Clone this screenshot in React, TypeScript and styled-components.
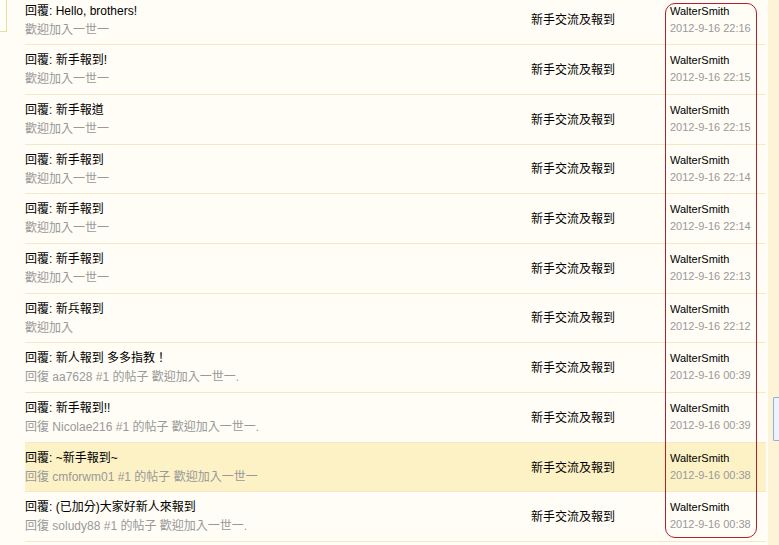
import React from "react";
import styled, { createGlobalStyle } from "styled-components";

const Global = createGlobalStyle`
  html, body { margin: 0; padding: 0; background: #fffdf6; overflow: hidden; }
  body { font-family: Tahoma, "Liberation Sans", "Noto Sans CJK TC", sans-serif; font-size: 12px; }
`;

const Page = styled.div`
  position: relative;
  display: flex;
  width: 779px;
  height: 545px;
  overflow: hidden;
  background: #fffdf6;
`;

const LeftGutter = styled.div`
  width: 25px;
  flex: none;
`;

const CornerBox = styled.div`
  width: 6px;
  height: 31px;
  border: 1px solid #f0dc9a;
  border-left: none;
  border-top: none;
  background: #fffef9;
`;

const List = styled.div`
  width: 741px;
  flex: none;
  margin-top: -4.5px;
`;

const Row = styled.div<{ $hl?: boolean }>`
  display: grid;
  grid-template-columns: 506px 139px 1fr;
  height: 49.7px;
  box-sizing: border-box;
  border-bottom: 1px solid #f3e9c9;
  background: ${(p) => (p.$hl ? "#fdf2c6" : "transparent")};
`;

const TitleCell = styled.div`
  padding-top: 7px;
  line-height: 17px;
  white-space: nowrap;
  display: flex;
  flex-direction: column;
  gap: 2px;
`;

const Title = styled.div`
  color: #000;
`;

const Sub = styled.div`
  color: #999;
`;

const Forum = styled.div`
  align-self: center;
  color: #000;
  padding-bottom: 2px;
`;

const AuthorCell = styled.div`
  padding-top: 7px;
  line-height: 16px;
  font-size: 11px;
  display: flex;
  flex-direction: column;
  gap: 1px;
`;

const Author = styled.div`
  color: #000;
`;

const DateText = styled.div`
  color: #999;
`;

const Sidebar = styled.div`
  flex: 1;
  margin-left: 2px;
  background: #fdf4d8;
  padding-top: 397px;
  padding-left: 5px;
`;

const Widget = styled.div`
  height: 42px;
  border: 1px solid #8fb0d8;
  border-right: none;
  border-radius: 2px 0 0 2px;
  background: #eef4fc;
`;

const Annotation = styled.div`
  position: absolute;
  left: 665px;
  top: 3px;
  width: 90px;
  height: 533px;
  border: 1px solid #b3202c;
  border-radius: 10px;
  pointer-events: none;
`;

type Item = { t: string; s: string; d: string; hl?: boolean };

const items: Item[] = [
  { t: "回覆: Hello, brothers!", s: "歡迎加入一世一", d: "2012-9-16 22:16" },
  { t: "回覆: 新手報到!", s: "歡迎加入一世一", d: "2012-9-16 22:15" },
  { t: "回覆: 新手報道", s: "歡迎加入一世一", d: "2012-9-16 22:15" },
  { t: "回覆: 新手報到", s: "歡迎加入一世一", d: "2012-9-16 22:14" },
  { t: "回覆: 新手報到", s: "歡迎加入一世一", d: "2012-9-16 22:14" },
  { t: "回覆: 新手報到", s: "歡迎加入一世一", d: "2012-9-16 22:13" },
  { t: "回覆: 新兵報到", s: "歡迎加入", d: "2012-9-16 22:12" },
  { t: "回覆: 新人報到 多多指教！", s: "回復 aa7628 #1 的帖子 歡迎加入一世一.", d: "2012-9-16 00:39" },
  { t: "回覆: 新手報到!!", s: "回復 Nicolae216 #1 的帖子 歡迎加入一世一.", d: "2012-9-16 00:39" },
  { t: "回覆: ~新手報到~", s: "回復 cmforwm01 #1 的帖子 歡迎加入一世一", d: "2012-9-16 00:38", hl: true },
  { t: "回覆: (已加分)大家好新人來報到", s: "回復 soludy88 #1 的帖子 歡迎加入一世一.", d: "2012-9-16 00:38" },
];

export default function App() {
  return (
    <>
      <Global />
      <Page>
        <LeftGutter>
          <CornerBox />
        </LeftGutter>
        <List>
          {items.map((it, i) => (
            <Row key={i} $hl={it.hl}>
              <TitleCell>
                <Title>{it.t}</Title>
                <Sub>{it.s}</Sub>
              </TitleCell>
              <Forum>新手交流及報到</Forum>
              <AuthorCell>
                <Author>WalterSmith</Author>
                <DateText>{it.d}</DateText>
              </AuthorCell>
            </Row>
          ))}
        </List>
        <Sidebar>
          <Widget />
        </Sidebar>
        <Annotation />
      </Page>
    </>
  );
}
